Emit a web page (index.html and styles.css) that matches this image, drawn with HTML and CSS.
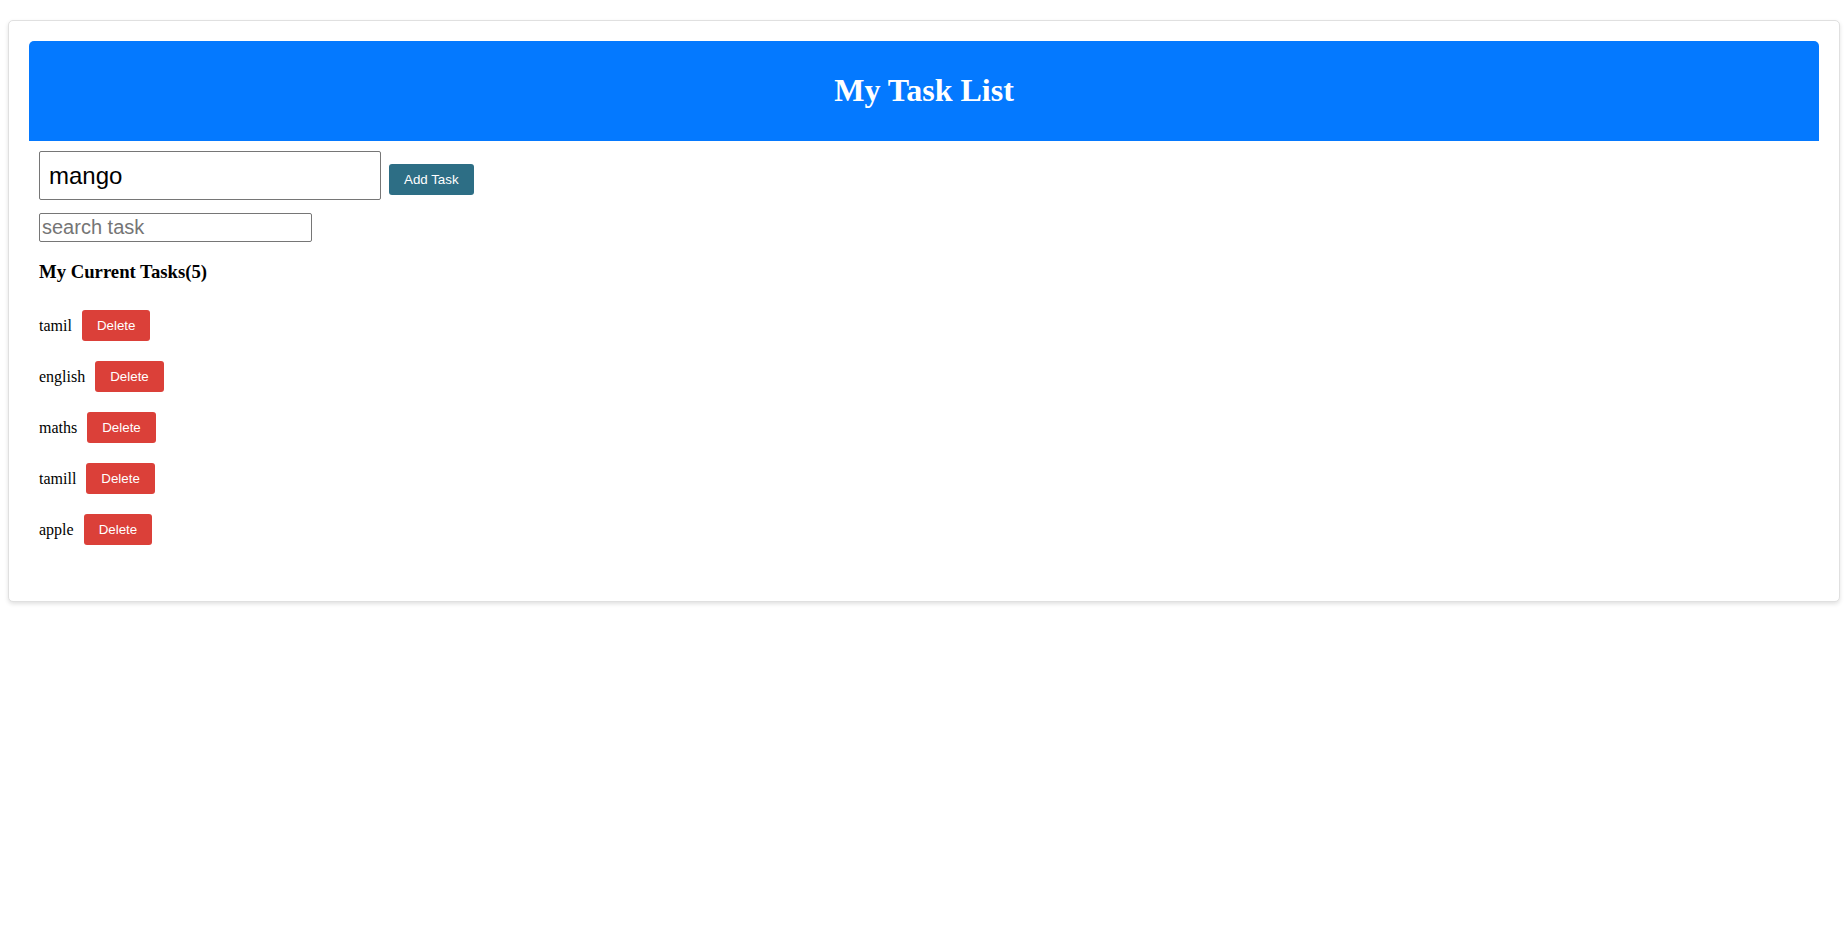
FILE: index.html
```html
<!DOCTYPE html>
<html>
<head>
<meta charset="utf-8">
<title>My Task List</title>
<link rel="stylesheet" href="styles.css">
</head>
<body>
<div class="card">
  <div class="header"><h1 class="title">My Task List</h1></div>
  <div class="content">
    <div class="add-row">
      <input class="task-input" type="text" value="mango">
      <button class="btn btn-add">Add Task</button>
    </div>
    <input class="search-input" type="text" placeholder="search task">
    <h3 class="subtitle">My Current Tasks(5)</h3>
    <ul class="task-list">
      <li class="task"><span class="task-name">tamil</span><button class="btn btn-delete">Delete</button></li>
      <li class="task"><span class="task-name">english</span><button class="btn btn-delete">Delete</button></li>
      <li class="task"><span class="task-name">maths</span><button class="btn btn-delete">Delete</button></li>
      <li class="task"><span class="task-name">tamill</span><button class="btn btn-delete">Delete</button></li>
      <li class="task"><span class="task-name">apple</span><button class="btn btn-delete">Delete</button></li>
    </ul>
  </div>
</div>
</body>
</html>
```
FILE: styles.css
```css
html, body {
  margin: 0;
  padding: 0;
  background: #fff;
}
body {
  padding: 20px 8px;
  font-family: "Liberation Serif", "Times New Roman", serif;
  font-size: 16px;
  color: #000;
}
.card {
  border: 1px solid #e0e0e0;
  border-radius: 5px;
  box-shadow: 0 2px 4px rgba(0, 0, 0, 0.12);
  padding: 20px;
  background: #fff;
}
.header {
  background: #0479ff;
  border-radius: 5px 5px 0 0;
  box-sizing: border-box;
  height: 100px;
  padding-bottom: 2px;
  display: flex;
  align-items: center;
  justify-content: center;
}
.title {
  margin: 0;
  color: #fff;
  font-size: 32px;
  font-weight: bold;
  line-height: 37px;
}
.content {
  padding: 10px;
}
.add-row {
  display: flex;
  align-items: center;
  gap: 8px;
}
.task-input {
  box-sizing: border-box;
  width: 342px;
  height: 49px;
  padding: 0 9px;
  border: 1px solid #767676;
  border-radius: 2px;
  font-family: "Liberation Sans", Arial, sans-serif;
  font-size: 24px;
  color: #000;
  outline: none;
  margin: 0;
}
.btn {
  border: none;
  border-radius: 3px;
  color: #fff;
  font-family: "Liberation Sans", Arial, sans-serif;
  font-size: 13.33px;
  height: 31px;
  padding: 0 15px;
  margin: 0;
  cursor: pointer;
}
.btn-add {
  background: #2d6e85;
  margin-top: 8px;
}
.search-input {
  display: block;
  box-sizing: border-box;
  width: 273px;
  height: 29px;
  margin-top: 13px;
  padding: 0 2px;
  border: 1px solid #767676;
  border-radius: 2px;
  font-family: "Liberation Sans", Arial, sans-serif;
  font-size: 20px;
  outline: none;
}
.search-input::placeholder {
  color: #757575;
}
.subtitle {
  margin: 19px 0 0;
  font-size: 18.72px;
  font-weight: bold;
  line-height: 21px;
}
.task-list {
  list-style: none;
  margin: 18px 0 16px;
  padding: 0;
}
.task {
  display: flex;
  align-items: center;
  gap: 10px;
  padding: 10px 0;
}
.task-name {
  font-size: 16px;
}
.btn-delete {
  background: #db4039;
}
```
